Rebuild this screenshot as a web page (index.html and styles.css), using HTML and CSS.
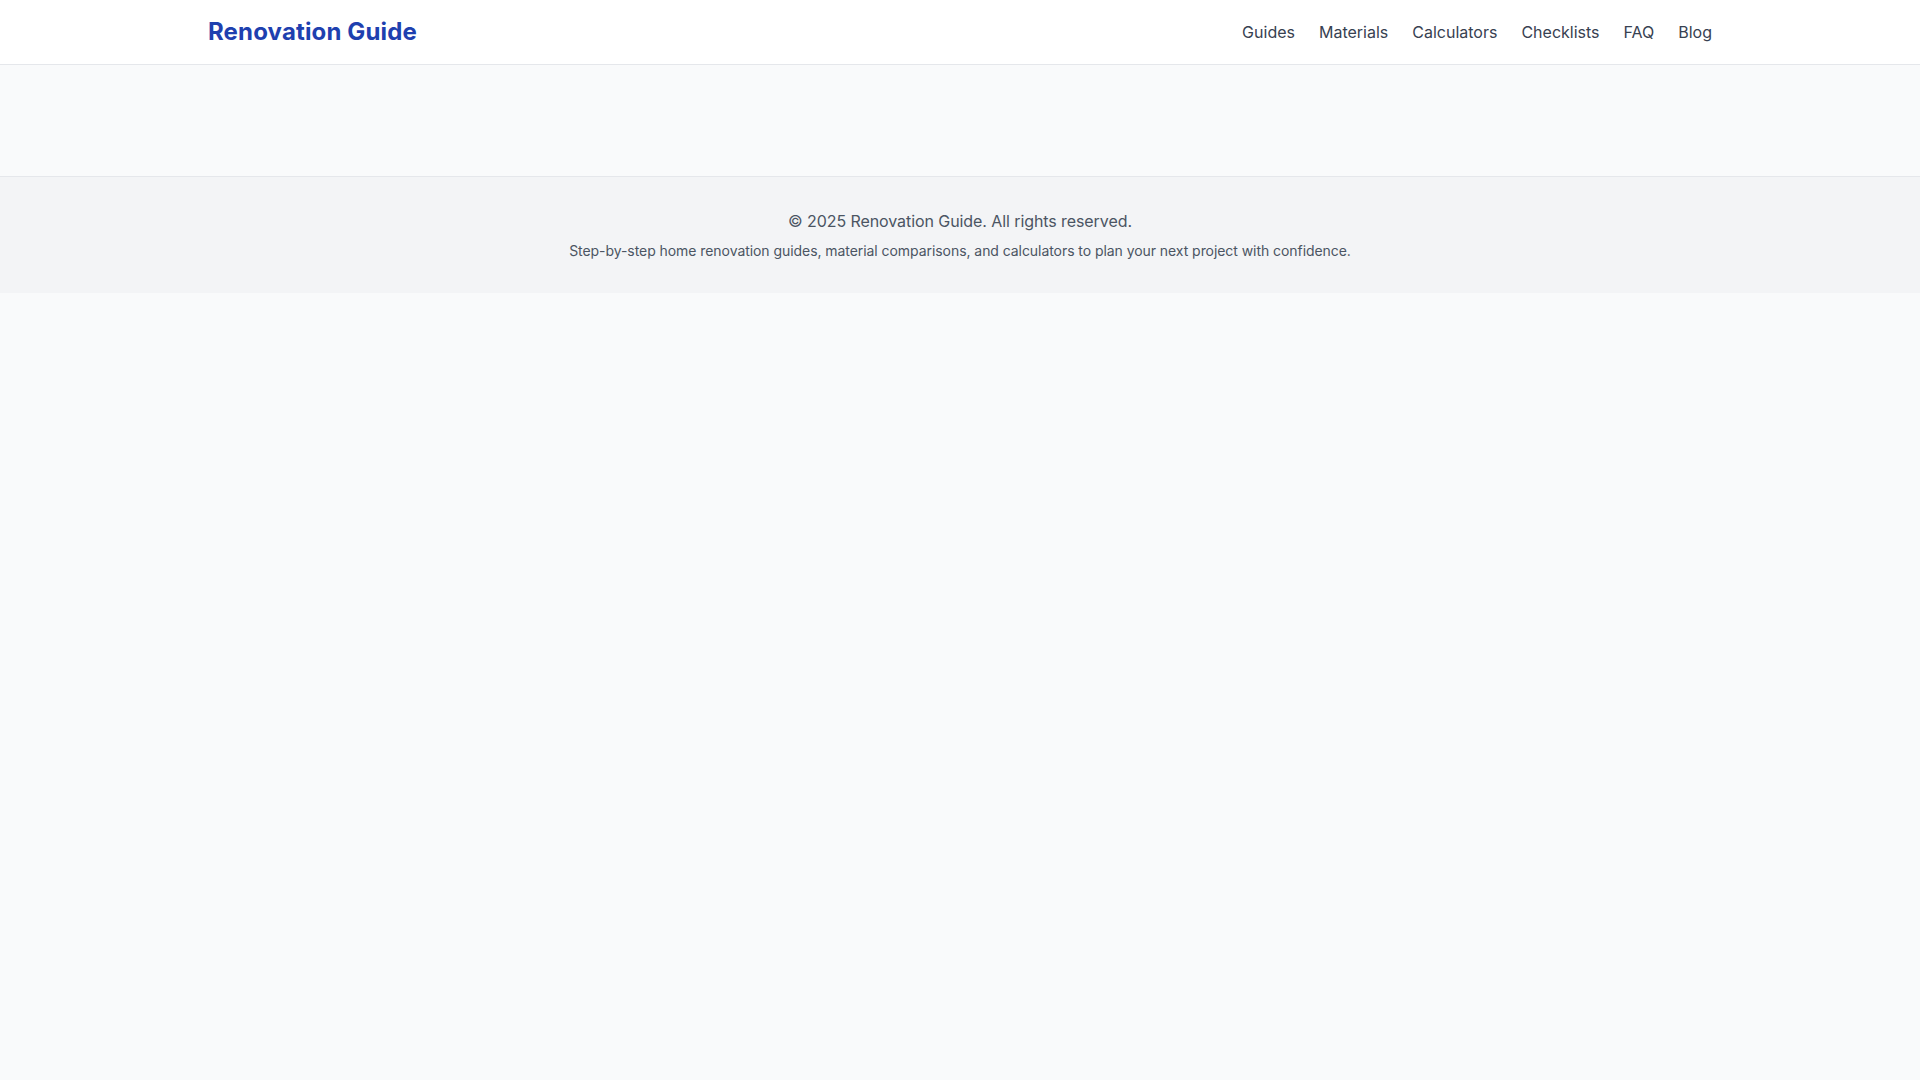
FILE: index.html
```html
<!DOCTYPE html>
<html lang="en">
<head>
<meta charset="utf-8">
<title>Renovation Guide</title>
<link rel="stylesheet" href="styles.css">
</head>
<body>
<header class="site-header">
  <div class="container header-inner">
    <a class="logo" href="#">Renovation Guide</a>
    <nav class="nav">
      <a href="#">Guides</a>
      <a href="#">Materials</a>
      <a href="#">Calculators</a>
      <a href="#">Checklists</a>
      <a href="#">FAQ</a>
      <a href="#">Blog</a>
    </nav>
  </div>
</header>
<main class="main"></main>
<footer class="site-footer">
  <p class="copy">© 2025 Renovation Guide. All rights reserved.</p>
  <p class="tagline">Step-by-step home renovation guides, material comparisons, and calculators to plan your next project with confidence.</p>
</footer>
</body>
</html>
```
FILE: styles.css
```css
* { box-sizing: border-box; }
html, body { margin: 0; padding: 0; }
body {
  font-family: Inter, "Noto Sans", "Liberation Sans", sans-serif;
  background: #f9fafb;
  color: #111827;
  min-height: 100vh;
}
a { text-decoration: none; }
.container {
  max-width: 1536px;
  margin: 0 auto;
  padding: 0 16px;
}
.site-header {
  background: #ffffff;
  border-bottom: 1px solid #e5e7eb;
}
.header-inner {
  height: 64px;
  display: flex;
  align-items: center;
  justify-content: space-between;
}
.logo {
  font-size: 24px;
  font-weight: 700;
  color: #1e40af;
  line-height: 32px;
  letter-spacing: 0.15px;
}
.nav {
  display: flex;
  gap: 24px;
}
.nav a {
  font-size: 16px;
  line-height: 24px;
  color: #374151;
}
.main {
  height: 111px;
}
.site-footer {
  background: #f3f4f6;
  border-top: 1px solid #e5e7eb;
  padding: 32px 16px;
  text-align: center;
  color: #4b5563;
}
.copy {
  margin: 0;
  font-size: 16px;
  line-height: 24px;
  letter-spacing: -0.08px;
}
.tagline {
  margin: 8px 0 0;
  font-size: 14px;
  line-height: 20px;
  letter-spacing: -0.06px;
}
```
